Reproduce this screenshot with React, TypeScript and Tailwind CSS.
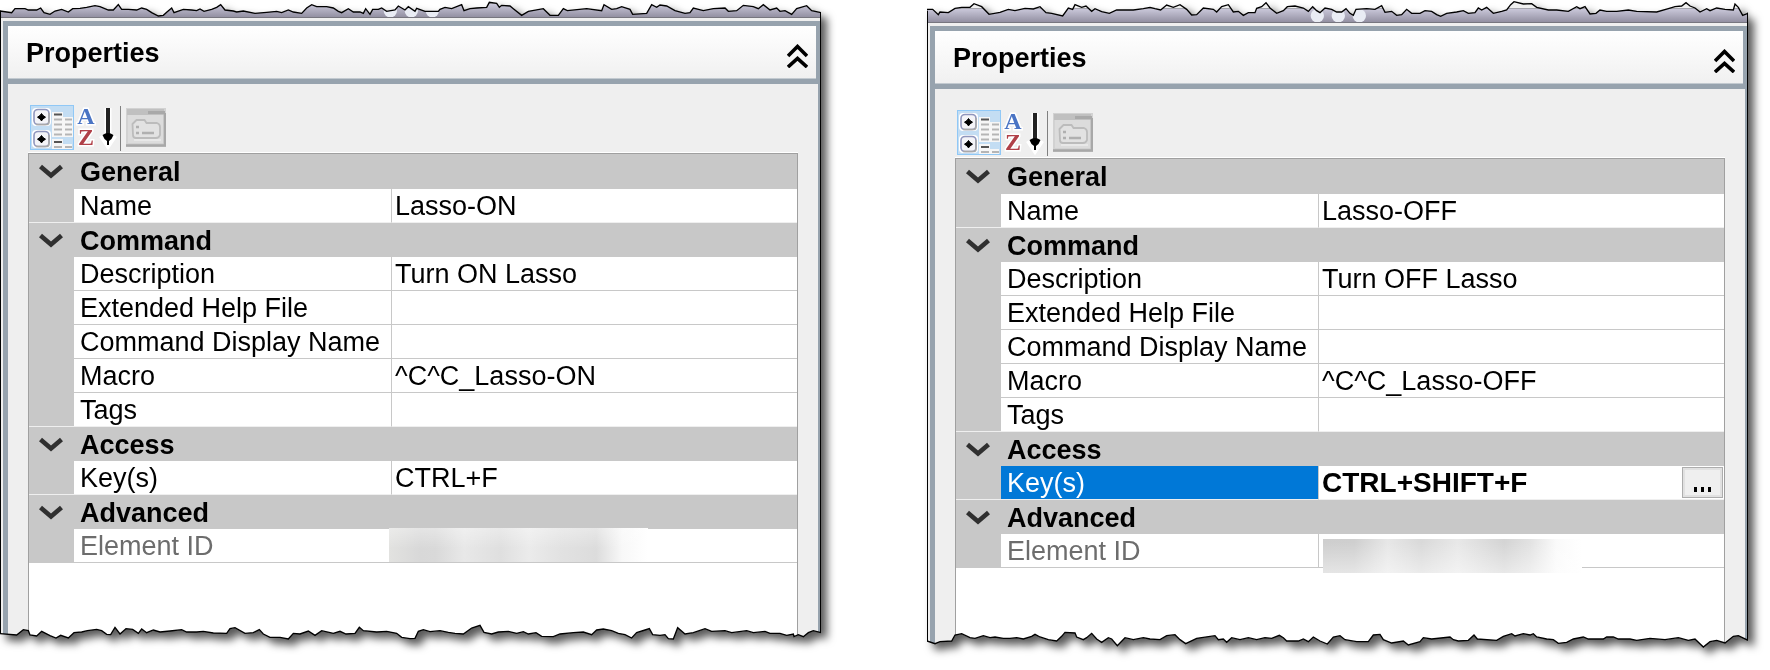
import React, { useId } from "react";

type Row = {
  label: string;
  value?: string;
  selected?: boolean;
  readOnly?: boolean;
};

type Category = { title: string; rows: Row[] };

type PanelData = {
  id: string;
  name: string;
  description: string;
  macro: string;
  keys: string;
  editingKeys: boolean;
  topEdge: string;
  topHeight: number;
  bottomEdge: string;
  redaction: string;
};

const LEFT_TOP =
  "0,33 35,38 45,26 75,26 85,30 110,30 122,24 132,38 150,43 165,33 185,28 205,36 218,26 240,25 260,22 285,17 300,20 325,30 340,30 355,14 365,28 385,28 410,30 425,24 440,28 455,38 475,48 490,46 500,37 515,24 522,38 550,28 575,30 590,32 600,27 612,34 635,28 650,22 662,14 675,30 700,33 710,36 730,33 765,40 800,37 830,34 845,38 865,30 880,36 905,40 920,24 935,14 950,20 980,20 1000,24 1015,34 1025,38 1045,26 1060,36 1080,36 1090,40 1097,26 1110,43 1118,28 1135,28 1145,24 1160,34 1185,30 1195,18 1215,30 1225,20 1245,34 1250,25 1275,34 1315,34 1320,28 1335,22 1355,26 1385,14 1392,32 1410,26 1430,24 1460,22 1468,7 1490,10 1498,22 1505,16 1530,18 1540,26 1565,46 1585,34 1630,26 1650,46 1675,46 1690,26 1702,32 1760,26 1805,32 1812,14 1835,28 1850,26 1865,20 1890,28 1898,43 1940,40 1955,14 1970,22 1980,15 2000,18 2025,32 2055,40 2070,38 2080,24 2110,32 2140,26 2175,24 2185,34 2210,32 2230,16 2260,20 2275,26 2290,14 2310,30 2330,24 2340,34 2355,32 2375,43 2390,26 2420,17 2435,32 2463,38";

const RIGHT_TOP =
  "0,28 17,28 34,44 39,36 64,38 84,25 104,22 129,22 141,11 164,20 186,43 219,37 244,28 264,32 294,25 319,27 339,20 357,38 374,40 407,48 424,24 437,28 444,14 464,22 477,18 494,34 504,26 524,35 547,40 569,30 619,30 649,26 669,22 684,26 701,30 719,15 739,22 759,14 779,28 794,45 809,44 829,24 859,28 869,36 884,20 904,14 919,36 934,34 949,46 964,38 984,38 989,25 1004,20 1017,8 1029,24 1049,40 1069,32 1081,20 1104,18 1129,24 1144,34 1157,20 1169,32 1179,38 1194,24 1214,28 1229,36 1244,36 1257,26 1269,40 1279,46 1287,28 1319,26 1344,28 1364,17 1374,37 1394,34 1409,46 1424,44 1439,28 1454,40 1479,40 1494,32 1514,34 1529,44 1541,49 1559,40 1589,36 1609,32 1624,40 1644,38 1654,24 1664,30 1679,22 1699,40 1724,34 1739,30 1751,14 1761,5 1789,12 1814,11 1829,22 1864,30 1889,30 1924,34 1949,20 1959,26 1974,20 1989,42 2007,40 2019,30 2039,34 2069,34 2104,30 2129,34 2189,36 2224,26 2244,20 2264,18 2277,8 2289,18 2304,24 2319,36 2339,26 2349,32 2369,24 2394,28 2419,30 2424,12 2434,22 2447,46 2463,40";

const LEFT_BOTTOM =
  "0,41 50,45 70,29 85,32 90,45 110,48 125,34 150,47 168,54 182,46 205,54 222,38 245,36 262,32 290,28 305,32 320,43 332,44 345,22 360,42 378,26 398,28 415,40 425,27 440,38 460,30 480,36 510,33 545,29 560,36 590,36 610,34 640,39 680,40 690,26 705,23 735,40 760,38 778,29 790,42 810,52 840,52 865,57 880,40 900,42 925,33 945,46 965,32 1000,40 1020,34 1038,42 1065,40 1078,22 1090,32 1130,36 1160,34 1190,40 1205,52 1230,56 1245,55 1255,34 1270,29 1290,35 1320,32 1345,37 1365,40 1390,42 1415,24 1440,16 1452,37 1475,42 1495,36 1525,34 1550,40 1570,35 1585,42 1608,38 1625,49 1660,50 1680,42 1720,38 1750,36 1775,44 1790,30 1810,27 1835,32 1855,40 1875,44 1895,54 1910,38 1935,30 1948,26 1958,44 1980,46 1995,44 2005,56 2020,57 2033,23 2055,42 2080,38 2115,26 2135,34 2175,32 2195,38 2240,32 2260,38 2295,34 2310,40 2340,40 2360,46 2380,42 2382,50 2395,44 2410,50 2425,38 2440,32 2463,38";

const RIGHT_BOTTOM =
  "0,48 24,56 39,50 74,48 84,30 104,26 129,38 144,40 169,32 189,38 204,36 229,40 249,40 269,38 289,42 314,34 324,28 339,36 364,44 389,48 404,34 414,22 444,24 449,36 469,44 479,38 494,25 509,42 524,52 544,38 554,42 571,62 594,38 619,44 649,38 669,42 699,44 719,32 744,29 759,44 776,56 809,40 864,32 874,44 889,42 899,52 914,38 939,44 964,38 989,44 1014,38 1034,40 1057,31 1069,38 1079,48 1114,48 1129,42 1144,50 1159,36 1179,48 1201,57 1219,36 1239,32 1254,44 1289,50 1324,50 1339,30 1359,28 1369,44 1394,54 1429,48 1444,60 1479,50 1489,38 1514,42 1569,36 1579,44 1594,48 1624,46 1641,30 1651,42 1709,46 1729,34 1754,26 1764,33 1789,26 1809,30 1819,26 1829,36 1859,42 1879,44 1894,55 1919,52 1939,42 1969,36 1984,42 2029,42 2039,36 2059,36 2074,42 2109,42 2129,46 2169,40 2214,44 2254,38 2284,46 2304,42 2329,66 2349,50 2369,46 2394,54 2419,34 2434,32 2463,46";

const PANELS: PanelData[] = [
  {
    id: "on",
    name: "Lasso-ON",
    description: "Turn ON Lasso",
    macro: "^C^C_Lasso-ON",
    keys: "CTRL+F",
    editingKeys: false,
    topEdge: LEFT_TOP,
    topHeight: 54,
    bottomEdge: LEFT_BOTTOM,
    redaction:
      "-left-[3px] -top-px bg-[linear-gradient(180deg,#ffffff55_0%,#ffffff00_60%),linear-gradient(90deg,#e2e2e0_0%,#d8d8d8_12%,#d9d9d9_18%,#e8e8e8_29%,#dfdfdf_43%,#ebebeb_54%,#e2e2e2_66%,#dcdcdc_80%,#f8f8f8_90%,#ffffff_100%)]",
  },
  {
    id: "off",
    name: "Lasso-OFF",
    description: "Turn OFF Lasso",
    macro: "^C^C_Lasso-OFF",
    keys: "CTRL+SHIFT+F",
    editingKeys: true,
    topEdge: RIGHT_TOP,
    topHeight: 69,
    bottomEdge: RIGHT_BOTTOM,
    redaction:
      "left-1 top-[5px] bg-[linear-gradient(0deg,#ffffff77_0%,#ffffff00_90%),linear-gradient(90deg,#cecece_0%,#cfcfcf_12%,#e7e7e7_25%,#d9d9d9_38%,#e8e8e8_52%,#d4d4d4_70%,#e2e2e2_80%,#fafafa_90%,#ffffff_100%)]",
  },
];

function TornTop({ points, height }: { points: string; height: number }) {
  const id = useId();
  return (
    <svg
      className={height === 54 ? "block h-[18px] w-full" : "block h-[23px] w-full"}
      viewBox={`0 0 2463 ${height}`}
      preserveAspectRatio="none"
      aria-hidden="true"
    >
      <defs>
        <linearGradient id={`${id}g`} x1="0" y1={height - 46} x2="0" y2={height} gradientUnits="userSpaceOnUse">
          <stop offset="0" stopColor="#cfcddf" />
          <stop offset="1" stopColor="#8f8c9e" />
        </linearGradient>
        <clipPath id={`${id}c`}>
          <polygon points={`0,${height} ${points} 2463,${height}`} />
        </clipPath>
      </defs>
      <g clipPath={`url(#${id}c)`}>
        <rect width="2463" height={height} fill="#efefef" />
        <rect y={height - 45} width="2463" height="42" fill={`url(#${id}g)`} />
        <rect y={height - 45} width="2463" height="3" fill="#a5a5ad" />
        {[1171, 1234, 1297].map((cx) => (
          <circle key={cx} cx={cx} cy={height - 22} r="20" fill="#e9ecf4" />
        ))}
        <rect y={height - 3} width="2463" height="3" fill="#77767f" />
      </g>
      <polyline points={points} fill="none" stroke="#000" strokeWidth="4" />
      <path d={`M1.500 32V${height}M2461.500 38V${height}`} stroke="#000" strokeWidth="3" />
    </svg>
  );
}

function TornBottom({ points }: { points: string }) {
  const id = useId();
  return (
    <svg className="block h-[25px] w-full" viewBox="0 0 2463 75" preserveAspectRatio="none" aria-hidden="true">
      <clipPath id={id}>
        <polygon points={`0,0 ${points} 2463,0`} />
      </clipPath>
      <g clipPath={`url(#${id})`}>
        <rect width="2463" height="75" fill="#efefef" />
        <rect x="9" width="15" height="75" fill="#97a3ae" />
        <rect x="84" width="2310" height="75" fill="#a0a0a0" />
        <rect x="87" width="2304" height="75" fill="#fff" />
        <rect x="2454" width="6" height="75" fill="#97a3ae" />
        <rect width="3" height="75" fill="#000" />
        <rect x="2460" width="3" height="75" fill="#000" />
      </g>
      <polyline points={points} fill="none" stroke="#000" strokeWidth="4" />
    </svg>
  );
}

function PlusBox({ y }: { y: number }) {
  return (
    <g transform={`translate(0 ${y})`}>
      <rect x="1" y="1" width="19" height="18" rx="4" fill="#fff" />
      <rect x="3" y="2.500" width="15" height="15" rx="4" fill="#f4f4f8" stroke="#9096bd" strokeWidth="1.600" />
      <path d="M5 17.500h11q2 0 2-3V6" fill="none" stroke="#a9a9a9" strokeWidth="1.600" />
      <path d="M10.500 6.500l1.500 2 2.500 1.700-2.500 1.700-1.500 2-1.500-2-2.500-1.700L9 8.500z" fill="#000" stroke="#000" />
    </g>
  );
}

function CategorizedIcon() {
  return (
    <svg className="block size-full" viewBox="0 0 42 43" aria-hidden="true">
      <rect x="21" y="6" width="21" height="25" fill="#f6f6f6" />
      <rect x="32" y="2" width="10" height="9" fill="#c3ddf3" />
      <rect x="21" y="33" width="11" height="10" fill="#f6f6f6" />
      <rect x="32" y="38" width="9" height="5" fill="#f6f6f6" />
      <PlusBox y={1} />
      <PlusBox y={23} />
      <path d="M23 8.500h8M23 36h8" stroke="#555" strokeWidth="2" />
      <path
        d="M23 13.500h8M23 18.500h8M23 23.500h8M23 28.500h8M34 13.500h7M34 18.500h7M34 23.500h7M34 28.500h7M23 41h8M34 41h7"
        stroke="#b5b5b5"
        strokeWidth="2"
      />
    </svg>
  );
}

function SortIcon() {
  return (
    <svg className="block size-full overflow-visible" viewBox="0 0 40 43" aria-hidden="true">
      <g
        fontFamily="'Liberation Serif', serif"
        fontWeight="700"
        fontSize="24"
        textAnchor="middle"
        stroke="#fff"
        strokeWidth="3"
        paintOrder="stroke"
      >
        <text x="9" y="18" fill="#4a74c4">
          A
        </text>
        <text x="9" y="39" fill="#b04048">
          Z
        </text>
      </g>
      <path d="M31 2v37M25 29l6 9 6-9" fill="none" stroke="#fff" strokeWidth="7" />
      <path d="M31 2v31" stroke="#222" strokeWidth="4" />
      <path d="M25.500 29q5.500-4 11 0l-2 4-2.500 2v4h-2v-4l-2.500-2z" fill="#000" />
    </svg>
  );
}

function PagesIcon() {
  return (
    <svg className="block size-full" viewBox="0 0 40 39" aria-hidden="true">
      <rect width="40" height="39" fill="#d2d2d2" />
      <rect x="1" y="1" width="37" height="6" fill="#c0c0c0" />
      <path d="M22 3h17v3H22z" fill="#a9a9a9" />
      <rect x="2" y="7" width="35" height="28" fill="#dcdcdc" />
      <path d="M0 37.500h39V5" fill="none" stroke="#a8a8a8" strokeWidth="2.500" />
      <path
        d="M6.500 16l4-4h8l2 3h10.500q3 1 3 4v8q-1 3-4 3h-20q-3 0-3-3z"
        fill="#e2e2e2"
        stroke="#bcbcbc"
        strokeWidth="1.800"
      />
      <path d="M10 19h3M10 25h3M16 25h12" stroke="#b0b0b0" strokeWidth="2.400" />
      <path d="M8 32h27" stroke="#ececec" strokeWidth="1.500" />
    </svg>
  );
}

function Chevron() {
  return (
    <svg className="block h-[15px] w-6" viewBox="0 0 24 15" aria-hidden="true">
      <path d="M1.500 2.500L12 11.500l10.500-9" fill="none" stroke="#303030" strokeWidth="4.600" />
    </svg>
  );
}

function CollapseIcon() {
  return (
    <svg className="block h-6 w-[21px]" viewBox="0 0 21 24" aria-hidden="true">
      <path d="M1 12l9.500-9.500L20 12M1 23l9.500-8.500L20 23" fill="none" stroke="#000" strokeWidth="3.600" />
    </svg>
  );
}

function PropertyRow({ row, panel, last }: { row: Row; panel: PanelData; last: boolean }) {
  const line = last && !row.readOnly ? "border-[#efefef]" : "border-[#c8c8c8]";
  const inputId = `${panel.id}-keys`;
  return (
    <tr className="h-[34px]">
      <td className={`border-b bg-[#c8c8c8] ${line}`} />
      <th
        scope="row"
        className={`overflow-hidden border-r border-b border-r-[#c8c8c8] pt-px pl-1.5 text-left font-normal whitespace-nowrap ${line} ${
          row.selected ? "bg-[#0078d7] text-white" : row.readOnly ? "bg-white text-[#6d6d6d]" : "bg-white"
        }`}
      >
        {row.selected ? <label htmlFor={inputId}>{row.label}</label> : row.label}
      </th>
      <td
        className={`border-b bg-white ${row.readOnly ? "relative" : row.selected ? "pl-[3px]" : "pt-px pl-[3px]"} ${line}`}
      >
        {row.selected ? (
          <div className="flex h-[33px] items-center pr-px">
            <input
              id={inputId}
              type="text"
              defaultValue={row.value}
              className="h-[33px] min-w-0 flex-1 bg-transparent pt-px text-[28px] font-bold outline-none"
            />
            <button
              type="button"
              aria-label="Edit keys"
              className="flex h-[31px] w-[41px] shrink-0 items-end justify-center gap-1 border border-[#adadad] bg-[#efefef] pb-[5px] shadow-[inset_0_0_0_2px_#e1e1e1]"
            >
              <span className="h-[5px] w-[3px] bg-black" />
              <span className="h-[5px] w-[3px] bg-black" />
              <span className="h-[5px] w-[3px] bg-black" />
            </button>
          </div>
        ) : (
          row.value
        )}
        {row.readOnly && <div className={`absolute h-[34px] w-[259px] ${panel.redaction}`} />}
      </td>
    </tr>
  );
}

function PropertiesPanel({ panel }: { panel: PanelData }) {
  const categories: Category[] = [
    { title: "General", rows: [{ label: "Name", value: panel.name }] },
    {
      title: "Command",
      rows: [
        { label: "Description", value: panel.description },
        { label: "Extended Help File" },
        { label: "Command Display Name" },
        { label: "Macro", value: panel.macro },
        { label: "Tags" },
      ],
    },
    { title: "Access", rows: [{ label: "Key(s)", value: panel.keys, selected: panel.editingKeys }] },
    { title: "Advanced", rows: [{ label: "Element ID", readOnly: true }] },
  ];

  return (
    <section className="min-w-0 flex-1 drop-shadow-[6px_6px_4px_rgba(0,0,0,0.65)]">
      <TornTop points={panel.topEdge} height={panel.topHeight} />
      <div className="border-x border-black bg-[#efefef] pt-[3px] pl-0.5">
        <header className="flex h-[63px] items-center justify-between border-5 border-r-4 border-[#97a3ae] bg-linear-to-b from-white to-[#f0f0f0] pr-2 pl-[18px] shadow-[inset_0_-1px_0_#c3cad0]">
          <h2 className="font-bold">Properties</h2>
          <button type="button" aria-label="Collapse" className="pt-1.5">
            <CollapseIcon />
          </button>
        </header>
        <div className="border-r-2 border-l-5 border-[#97a3ae] px-5 pt-[21px]">
          <div className="flex h-12 items-start border-b border-white pl-0.5">
            <button type="button" aria-label="Categorized" className="h-[45px] w-11 border border-[#90c8f6] bg-[#c3ddf3]">
              <CategorizedIcon />
            </button>
            <button type="button" aria-label="Alphabetical" className="ml-[3px] h-[45px] w-10 py-px">
              <SortIcon />
            </button>
            <span className="mt-px ml-[3px] h-[45px] w-px bg-[#808080]" />
            <button type="button" aria-label="Property Pages" disabled className="mt-[3px] ml-[5px] h-[39px] w-10">
              <PagesIcon />
            </button>
          </div>
          <div className="border-x border-t border-[#a0a0a0] bg-white pb-[57px]">
            <table className="w-full table-fixed border-separate border-spacing-0">
              <colgroup>
                <col className="w-[45px]" />
                <col className="w-[318px]" />
                <col />
              </colgroup>
              {categories.map((category, index) => (
                <tbody key={category.title}>
                  <tr className={index === 0 ? "h-[35px]" : "h-[34px]"}>
                    <td className="bg-[#c8c8c8] align-top">
                      <button type="button" aria-label={`Collapse ${category.title}`} className="block pt-2.5 pl-2.5">
                        <Chevron />
                      </button>
                    </td>
                    <th scope="rowgroup" colSpan={2} className="bg-[#c8c8c8] pt-px pl-1.5 text-left font-bold">
                      {category.title}
                    </th>
                  </tr>
                  {category.rows.map((row, rowIndex) => (
                    <PropertyRow
                      key={row.label}
                      row={row}
                      panel={panel}
                      last={rowIndex === category.rows.length - 1}
                    />
                  ))}
                </tbody>
              ))}
            </table>
          </div>
        </div>
      </div>
      <TornBottom points={panel.bottomEdge} />
    </section>
  );
}

export default function App() {
  return (
    <main className="flex items-start gap-[106px] bg-white pr-[22px] pb-5 font-['Liberation_Sans',Arial,sans-serif] text-[27px] leading-[32px] text-black">
      {PANELS.map((panel) => (
        <PropertiesPanel key={panel.id} panel={panel} />
      ))}
    </main>
  );
}
